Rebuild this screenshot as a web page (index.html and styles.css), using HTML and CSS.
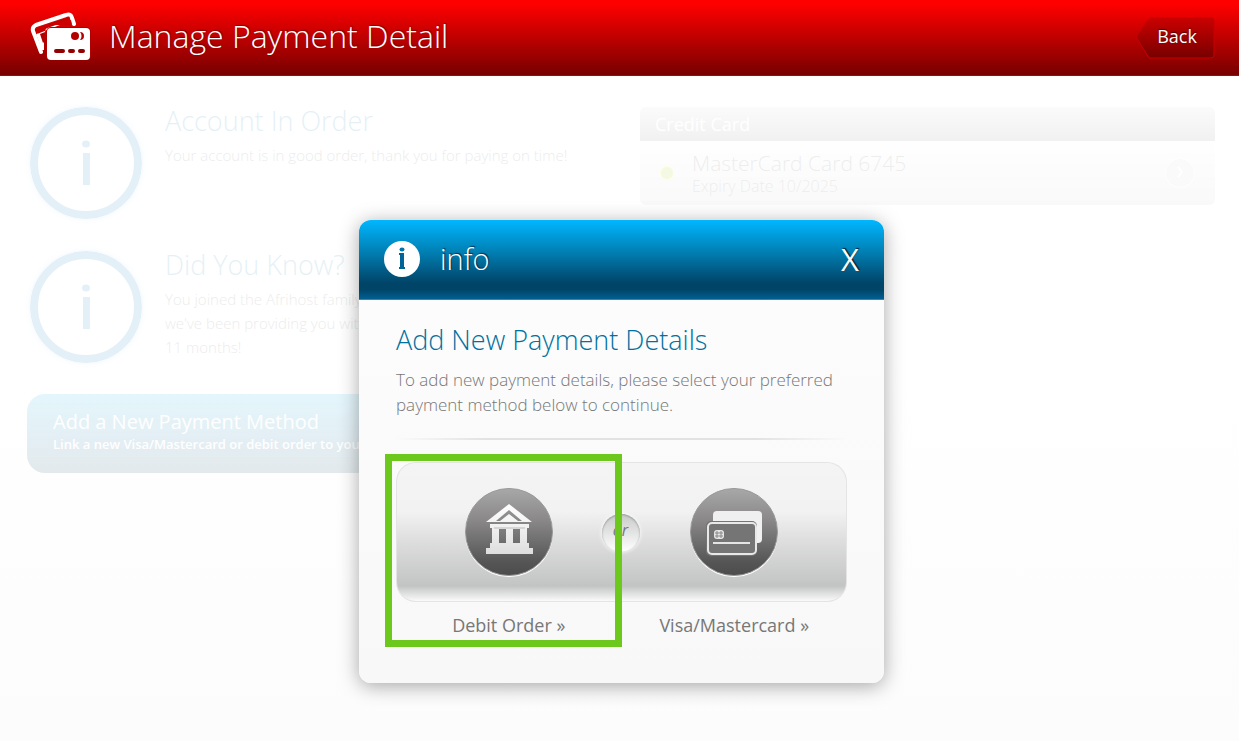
FILE: index.html
```html
<!DOCTYPE html>
<html lang="en">

<head>
  <meta charset="utf-8">
  <meta name="viewport" content="width=device-width, initial-scale=1.0">
  <title>Manage Payment Detail</title>
  <link rel="stylesheet" href="styles.css">
</head>

<body>

  <header class="top-bar">
    <svg class="cards-icon" width="62" height="48" viewBox="0 0 62 48" aria-hidden="true">
      <path d="M11 40 L3 19 Q2 15 6 13 L36 3 Q41 1 42 6 L44 12" fill="none" stroke="#fff" stroke-width="4" stroke-linecap="round" stroke-linejoin="round" />
      <path d="M7 22 L40 9 L42 13 L24 13 Q15 14 15 20 L15 21 L12 22 L14 31 L14 38 L11 38 Z" fill="#fff" />
      <path d="M7 18 L38 7" stroke="#c80000" stroke-width="3" stroke-linecap="round" />
      <path d="M27 13 L41 8 L42 13 Z" fill="#c80000" />
      <path d="M10 22 L15 20 L14 30 L13 31 Z" fill="#b00000" />
      <path d="M7 22 L13 36" stroke="#fff" stroke-width="2" />
      <rect x="16" y="15" width="45" height="34" rx="5" fill="#b00000" />
      <rect x="17" y="16" width="43" height="32" rx="4" fill="#fff" />
      <circle cx="45" cy="24" r="4" fill="#b50000" />
      <path d="M50 20 a4 4 0 1 1 0 8 a6 6 0 0 0 0 -8 z" fill="#b50000" />
      <path d="M26 39 h7 M40 39 h3 M50 39 h3" stroke="#950000" stroke-width="4" stroke-linecap="round" />
    </svg>
    <h1>Manage Payment Detail</h1>
    <button class="back-btn" type="button">
      <svg class="back-shape" viewBox="0 0 80 42" preserveAspectRatio="none" aria-hidden="true">
        <defs>
          <linearGradient id="back-fill" x1="0" y1="0" x2="0" y2="1">
            <stop offset="0" stop-color="#cb0000" />
            <stop offset="1" stop-color="#780000" />
          </linearGradient>
        </defs>
        <path d="M1 20 L12 4 Q14 1 17 1 L76 1 Q79 1 79 4 L79 38 Q79 41 76 41 L14 41 Z" fill="url(#back-fill)" stroke="#c80000" />
      </svg>
      <span>Back</span>
    </button>
  </header>

  <main class="page">
    <div class="left-col">
      <section class="notice">
        <svg class="info-ring" viewBox="0 0 112 112" aria-hidden="true">
          <circle cx="56" cy="56" r="52" fill="none" stroke="currentColor" stroke-width="8" />
          <ellipse cx="56" cy="37" rx="4" ry="3.5" fill="currentColor" />
          <rect x="53" y="46" width="7" height="32" fill="currentColor" />
        </svg>
        <div>
          <h2>Account In Order</h2>
          <p>Your account is in good order, thank you for paying on time!</p>
        </div>
      </section>

      <section class="notice">
        <svg class="info-ring" viewBox="0 0 112 112" aria-hidden="true">
          <circle cx="56" cy="56" r="52" fill="none" stroke="currentColor" stroke-width="8" />
          <ellipse cx="56" cy="37" rx="4" ry="3.5" fill="currentColor" />
          <rect x="53" y="46" width="7" height="32" fill="currentColor" />
        </svg>
        <div>
          <h2>Did You Know?</h2>
          <p>You joined the Afrihost family<br>we've been providing you with<br>11 months!</p>
        </div>
      </section>

      <button class="add-btn" type="button">
        <span class="add-title">Add a New Payment Method</span>
        <span class="add-text">Link a new Visa/Mastercard or debit order to your</span>
      </button>
    </div>

    <section class="card-list">
      <h3>Credit Card</h3>
      <div class="card-row">
        <span class="status-dot"></span>
        <div class="card-info">
          <span class="card-name">MasterCard Card 6745</span>
          <span class="card-date">Expiry Date 10/2025</span>
        </div>
        <button class="open-btn" type="button" aria-label="Open card">
          <svg width="8" height="12" viewBox="0 0 8 12" aria-hidden="true">
            <path d="M2 1 L6 6 L2 11" fill="none" stroke="#fff" stroke-width="2" />
          </svg>
        </button>
      </div>
    </section>
  </main>

  <div class="overlay">
    <div class="modal" role="dialog" aria-labelledby="modal-title">
      <div class="modal-head">
        <svg width="36" height="36" viewBox="0 0 36 36" aria-hidden="true">
          <circle cx="18" cy="18" r="18" fill="#fff" />
          <ellipse cx="18" cy="8.500" rx="2.500" ry="2" fill="#0074a8" />
          <path d="M15 12 h5 v14 h1 v2 h-6 v-2 h1 v-12 h-1 z" fill="#006499" />
        </svg>
        <span class="modal-name">info</span>
        <button class="close-btn" type="button" aria-label="Close">X</button>
      </div>

      <div class="modal-body">
        <h2 id="modal-title">Add New Payment Details</h2>
        <p>To add new payment details, please select your preferred payment method below to continue.</p>
        <div class="divider"></div>

        <div class="options">
          <a class="option" href="#debit">
            <span class="option-top">
              <svg width="90" height="90" viewBox="0 0 90 90" aria-hidden="true">
                <defs>
                  <linearGradient id="disc" x1="0" y1="0" x2="0" y2="1">
                    <stop offset="0" stop-color="#a8a8a8" />
                    <stop offset="0.35" stop-color="#8b898a" />
                    <stop offset="0.85" stop-color="#555" />
                    <stop offset="1" stop-color="#4c4c4c" />
                  </linearGradient>
                  <linearGradient id="bank" gradientUnits="userSpaceOnUse" x1="0" y1="17" x2="0" y2="67">
                    <stop offset="0" stop-color="#fff" />
                    <stop offset="1" stop-color="#dedede" />
                  </linearGradient>
                </defs>
                <circle cx="45" cy="46" r="44" fill="#fff" />
                <circle cx="45" cy="45" r="43.500" fill="url(#disc)" stroke="#999" />
                <g fill="url(#bank)">
                  <path fill-rule="evenodd" d="M45 17 L68 35 L22 35 Z M45 23 L32 34 L58 34 Z" />
                  <path d="M45 27 L54 34 L36 34 Z" />
                  <path fill-rule="evenodd" d="M26 37 H65 V41 H63 V56 H65 V61 H69 V67 H22 V61 H26 V56 H28 V41 H26 Z M35 42 V56 H42 V42 Z M49 42 V56 H56 V42 Z" />
                </g>
                <path d="M30 41 h31" stroke="#bbb" />
              </svg>
            </span>
            <span class="option-label">Debit Order »</span>
          </a>
          <a class="option" href="#card">
            <span class="option-top">
              <svg width="90" height="90" viewBox="0 0 90 90" aria-hidden="true">
                <circle cx="45" cy="46" r="44" fill="#fff" />
                <circle cx="45" cy="45" r="43.500" fill="url(#disc)" stroke="#999" />
                <rect x="24" y="24" width="49" height="32" rx="4" fill="#f0f0f0" />
                <rect x="17" y="34" width="51" height="35" rx="5" fill="#747474" />
                <rect x="19" y="36" width="48" height="31" rx="4" fill="#757575" stroke="#e8e8e8" stroke-width="2" />
                <rect x="25" y="43" width="10" height="9" rx="3" fill="#e6e6e6" />
                <path d="M26 46 h8 M26 49 h8 M28 44 v7 M32 44 v7" stroke="#888" />
                <path d="M24 56 h37" stroke="#e4e4e4" stroke-width="2" />
              </svg>
            </span>
            <span class="option-label">Visa/Mastercard »</span>
          </a>
          <span class="or-badge">or</span>
          <span class="highlight"></span>
        </div>
      </div>
    </div>
  </div>

</body>

</html>
```

FILE: styles.css
```css
* {
  box-sizing: border-box;
}

body {
  margin: 0;
  min-height: 100vh;
  background: linear-gradient(#fff 50%, #fcfcfc);
  font-family: "Open Sans", "Noto Sans", sans-serif;
  font-size: 16px;
  color: #777;
}

h1,
h2,
h3,
p {
  margin: 0;
  font-weight: 300;
}

button {
  border: none;
  background: none;
  padding: 0;
  font-family: inherit;
  cursor: pointer;
}

/* Red bar */
.top-bar {
  height: 76px;
  padding: 0 24px 4px 30px;
  display: flex;
  align-items: center;
  gap: 17px;
  color: #fff;
  background: linear-gradient(#ff0000 5%, #7a0000 98%);
  border-bottom: 1px solid #b40000;
}

.top-bar h1 {
  flex: 1;
  font-size: 32px;
  text-shadow: 1px -1px 1px rgba(60, 0, 0, 0.5);
}

.back-btn {
  position: relative;
  width: 80px;
  height: 42px;
  margin-top: 4px;
  padding: 0 0 4px 4px;
  color: #fff;
  font-size: 18px;
  text-shadow: 0 -1px 1px #400;
}

.back-btn span {
  position: relative;
}

.back-shape {
  position: absolute;
  left: 0;
  top: 0;
  width: 100%;
  height: 100%;
}

/* Page behind the popup */
.page {
  display: flex;
  align-items: flex-start;
  gap: 30px;
  padding: 31px 24px 0 30px;
  opacity: 0.1;
}

.left-col {
  flex: 1;
  display: flex;
  flex-direction: column;
  gap: 32px;
}

.notice {
  display: flex;
  gap: 23px;
  color: #444;
}

.info-ring {
  flex: none;
  width: 112px;
  height: 112px;
  color: #0078b4;
  border-radius: 50%;
  box-shadow: 0 0 4px #6bf;
}

.notice h2 {
  color: #0078a8;
  font-size: 27px;
  line-height: 28px;
  margin-bottom: 8px;
}

.notice p {
  font-size: 15px;
  line-height: 24px;
}

.add-btn {
  margin: -1px 0 0 -3px;
  height: 79px;
  padding: 0 26px 4px;
  display: flex;
  flex-direction: column;
  justify-content: center;
  text-align: left;
  color: #fff;
  border-radius: 18px;
  background: linear-gradient(#00b4e6, #0070a8 55%, #003c50);
}

.add-title {
  font-size: 20px;
  line-height: 24px;
}

.add-text {
  font-size: 13px;
  font-weight: 600;
  line-height: 20px;
}

.card-list {
  width: 575px;
}

.card-list h3 {
  height: 34px;
  padding-left: 15px;
  border-radius: 6px 6px 0 0;
  color: #fff;
  font-size: 18px;
  font-weight: 400;
  line-height: 34px;
  background: linear-gradient(#ddd, #7d7d7d);
}

.card-row {
  height: 64px;
  display: flex;
  align-items: center;
  padding: 0 20px;
  background: linear-gradient(#fff, #ccc);
  border-radius: 0 0 6px 6px;
}

.status-dot {
  width: 14px;
  height: 14px;
  margin-right: 18px;
  border-radius: 50%;
  background: #a0c800;
  border: 1px solid #ff0;
}

.card-info {
  flex: 1;
  display: flex;
  flex-direction: column;
  color: #555;
}

.card-name {
  font-size: 21px;
  font-weight: 300;
  line-height: 26px;
}

.card-date {
  font-size: 16px;
  font-weight: 300;
  line-height: 20px;
}

.open-btn {
  width: 30px;
  height: 30px;
  border-radius: 50%;
  background: #d4d4d4;
  border: 1px solid #fff;
}

/* Popup */
.overlay {
  position: absolute;
  top: 220px;
  left: 0;
  right: 0;
  display: flex;
  justify-content: center;
  padding-left: 4px;
}

.modal {
  width: 525px;
  border-radius: 12px;
  background: linear-gradient(#fdfdfd, #f8f8f8);
  box-shadow: 0 3px 20px rgba(0, 0, 0, 0.35);
}

.modal-head {
  height: 80px;
  display: flex;
  align-items: center;
  gap: 20px;
  padding: 0 25px 2px;
  color: #fff;
  border-radius: 12px 12px 0 0;
  border-bottom: 1px solid #0095d4;
  background: linear-gradient(#00b7ff, #0080b4 40%, #004468 80%, #004468 88%, #005f91);
}

.modal-name {
  flex: 1;
  font-size: 29px;
  font-weight: 300;
  text-shadow: 1px -1px 1px #003050;
}

.close-btn {
  color: #fff;
  font-size: 31px;
  text-shadow: 1px -1px 1px #001c30;
}

.modal-body {
  padding: 24px 37px 45px;
}

.modal-body h2 {
  color: #00719f;
  font-size: 27px;
  line-height: 32px;
  margin-bottom: 11px;
}

.modal-body p {
  font-size: 17px;
  line-height: 25px;
}

.divider {
  height: 2px;
  margin: 21px 0 22px;
  background: linear-gradient(to right, transparent, #e2e2e2 20%, #e2e2e2 80%, transparent);
}

.options {
  position: relative;
  display: flex;
  border-radius: 20px;
}

.option {
  flex: 1;
  color: #777;
  text-align: center;
  text-decoration: none;
}

.option-top {
  height: 140px;
  display: flex;
  align-items: center;
  justify-content: center;
  border: 1px solid #e4e4e4;
  background: linear-gradient(#f4f4f4, #f2f2f2 35%, #dedfde 55%, #c5c7c6 86%, #c2c4c3 89%, #fafafa);
}

.option:first-child .option-top {
  border-right: none;
  border-radius: 20px 0 0 20px;
}

.option:nth-child(2) .option-top {
  border-left: none;
  border-radius: 0 20px 20px 0;
}

.option-label {
  display: block;
  margin-top: 10px;
  font-size: 18px;
  line-height: 26px;
}

.or-badge {
  position: absolute;
  top: 52px;
  left: 50%;
  width: 38px;
  height: 38px;
  margin-left: -20px;
  border-radius: 50%;
  background: linear-gradient(#c8cac9, #fff);
  box-shadow: 0 0 4px #fff, inset 0 1px 2px #999;
  font-size: 16px;
  font-style: italic;
  line-height: 32px;
  text-align: center;
}

/* Green marker round the debit order option */
.highlight {
  position: absolute;
  top: -8px;
  left: -11px;
  width: 237px;
  height: 193px;
  border: 7px solid #6dc81e;
  pointer-events: none;
}
```
